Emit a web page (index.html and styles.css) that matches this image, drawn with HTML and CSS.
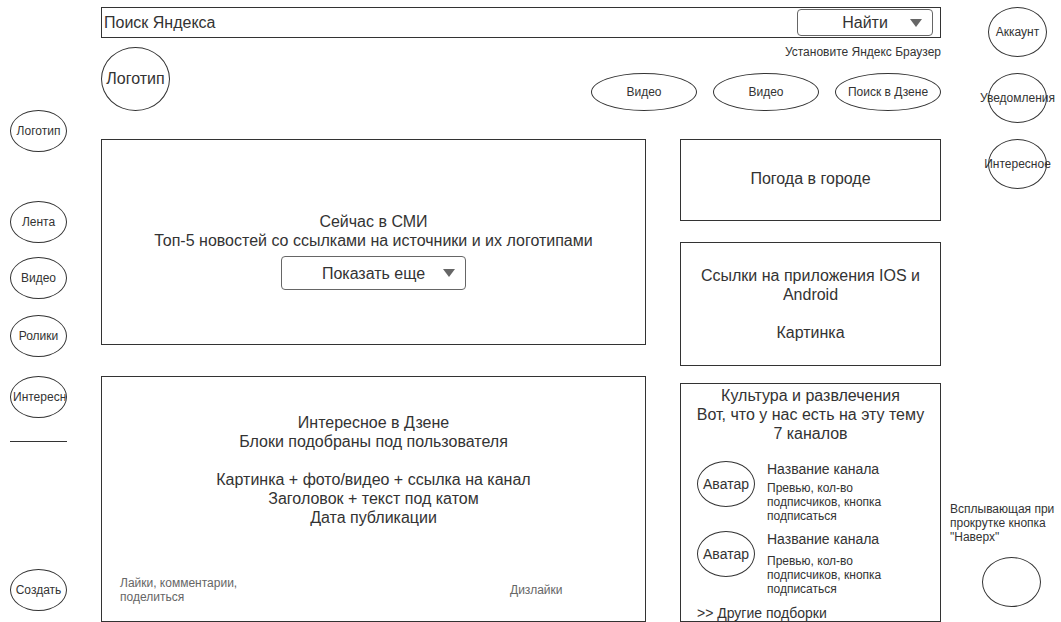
FILE: index.html
```html
<!DOCTYPE html>
<html lang="ru">

<head>
    <meta charset="utf-8">
    <title>Дзен — макет главной</title>
    <link rel="stylesheet" href="styles.css">
</head>

<body>
    <div class="page">
        <div class="left-nav">
            <div class="oval nav-oval nav-logo">Логотип</div>
            <div class="oval nav-oval nav-feed">Лента</div>
            <div class="oval nav-oval nav-video">Видео</div>
            <div class="oval nav-oval nav-clips">Ролики</div>
            <div class="oval nav-oval nav-interest clipped">Интересное</div>
            <div class="nav-line"></div>
            <div class="oval nav-oval nav-create">Создать</div>
        </div>

        <div class="center">
            <div class="search">
                <span class="search-text">Поиск Яндекса</span>
                <div class="dropdown find-btn">Найти</div>
            </div>

            <div class="header-row">
                <div class="oval logo">Логотип</div>
                <div class="header-right">
                    <div class="install">Установите Яндекс Браузер</div>
                    <div class="header-links">
                        <div class="oval link-oval">Видео</div>
                        <div class="oval link-oval">Видео</div>
                        <div class="oval link-oval">Поиск в Дзене</div>
                    </div>
                </div>
            </div>

            <div class="content">
                <div class="col-main">
                    <div class="box news">
                        <p>Сейчас в СМИ<br>Топ-5 новостей со ссылками на источники и их логотипами</p>
                        <div class="dropdown more-btn">Показать еще</div>
                    </div>
                    <div class="box feed">
                        <p>Интересное в Дзене<br>Блоки подобраны под пользователя<br><br>Картинка + фото/видео + ссылка на канал<br>Заголовок + текст под катом<br>Дата публикации</p>
                        <div class="feed-footer">
                            <span class="small likes">Лайки, комментарии, поделиться</span>
                            <span class="small">Дизлайки</span>
                        </div>
                    </div>
                </div>

                <div class="col-side">
                    <div class="box weather">Погода в городе</div>
                    <div class="box apps">Ссылки на приложения IOS и<br>Android<br><br>Картинка</div>
                    <div class="box culture">
                        <p>Культура и развлечения<br>Вот, что у нас есть на эту тему<br>7 каналов</p>
                        <div class="channel">
                            <div class="oval avatar">Аватар</div>
                            <div class="channel-info">
                                <div class="channel-name">Название канала</div>
                                <div class="channel-desc">Превью, кол-во подписчиков, кнопка подписаться</div>
                            </div>
                        </div>
                        <div class="channel">
                            <div class="oval avatar">Аватар</div>
                            <div class="channel-info">
                                <div class="channel-name">Название канала</div>
                                <div class="channel-desc second">Превью, кол-во подписчиков, кнопка подписаться</div>
                            </div>
                        </div>
                        <div class="more-link">&gt;&gt; Другие подборки</div>
                    </div>
                </div>
            </div>
        </div>

        <div class="right-nav">
            <div class="oval side-oval">Аккаунт</div>
            <div class="oval side-oval">Уведомления</div>
            <div class="oval side-oval">Интересное</div>
            <div class="up-note">Всплывающая при прокрутке кнопка "Наверх"</div>
            <div class="oval up-btn"></div>
        </div>
    </div>
</body>
</html>
```

FILE: styles.css
```css
* {
    box-sizing: border-box;
}

body {
    margin: 0;
    font-family: "Liberation Sans", Arial, sans-serif;
    color: #333;
    background-color: #fff;
    overflow: hidden;
}

p {
    margin: 0;
}

.page {
    display: flex;
    width: 1061px;
    height: 622px;
}

/* ovals */
.oval {
    display: flex;
    align-items: center;
    justify-content: center;
    border: 1px solid #333;
    border-radius: 50%;
    white-space: nowrap;
    text-align: center;
}

/* left column */
.left-nav {
    width: 101px;
    flex: none;
    padding-left: 10px;
    display: flex;
    flex-direction: column;
}

.nav-oval {
    width: 57px;
    height: 42px;
    font-size: 12px;
}

.nav-logo {
    margin-top: 110px;
}

.nav-feed {
    margin-top: 49px;
}

.nav-video {
    margin-top: 14px;
}

.nav-clips {
    margin-top: 16px;
}

.nav-interest {
    margin-top: 19px;
}

.clipped {
    overflow: hidden;
    justify-content: flex-start;
    padding-left: 2px;
}

.nav-line {
    width: 57px;
    margin-top: 23px;
    border-top: 1px solid #333;
}

.nav-create {
    margin-top: 127px;
}

/* center */
.center {
    width: 840px;
    flex: none;
}

.search {
    margin-top: 7px;
    height: 31px;
    border: 1px solid #333;
    display: flex;
    align-items: center;
    justify-content: space-between;
    padding: 0 7px 0 2px;
    font-size: 16px;
}

.dropdown {
    position: relative;
    display: flex;
    align-items: center;
    justify-content: center;
    border: 1px solid #666;
    border-radius: 4px;
    font-size: 16px;
}

.dropdown::after {
    content: "";
    position: absolute;
    right: 10px;
    top: 50%;
    margin-top: -4px;
    border-left: 6px solid transparent;
    border-right: 6px solid transparent;
    border-top: 8px solid #666;
}

.find-btn {
    width: 136px;
    height: 27px;
}

.header-row {
    height: 101px;
    display: flex;
    justify-content: space-between;
}

.logo {
    margin-top: 9px;
    width: 69px;
    height: 64px;
    font-size: 16px;
}

.header-right {
    display: flex;
    flex-direction: column;
    align-items: flex-end;
}

.install {
    margin-top: 7px;
    font-size: 12px;
    line-height: 14px;
}

.header-links {
    margin-top: 14px;
    display: flex;
    gap: 16px;
}

.link-oval {
    width: 106px;
    height: 38px;
    font-size: 12px;
}

/* content */
.content {
    display: grid;
    grid-template-columns: 545px 261px;
    column-gap: 34px;
}

.box {
    border: 1px solid #333;
    font-size: 16px;
    line-height: 19px;
    text-align: center;
}

.col-main,
.col-side {
    display: flex;
    flex-direction: column;
}

.news {
    height: 206px;
    padding-top: 72px;
    display: flex;
    flex-direction: column;
    align-items: center;
}

.more-btn {
    margin-top: 6px;
    width: 185px;
    height: 34px;
}

.feed {
    margin-top: 31px;
    height: 246px;
    padding-top: 36px;
}

.feed-footer {
    margin-top: 49px;
    padding-left: 18px;
    display: flex;
    align-items: center;
    text-align: left;
}

.small {
    font-size: 12px;
    line-height: 14px;
    color: #666;
}

.likes {
    width: 390px;
    padding-right: 260px;
}

.weather {
    height: 82px;
    padding-bottom: 3px;
    display: flex;
    align-items: center;
    justify-content: center;
}

.apps {
    margin-top: 21px;
    height: 124px;
    display: flex;
    align-items: center;
    justify-content: center;
}

.culture {
    margin-top: 17px;
    height: 239px;
    padding-top: 2px;
}

.culture p {
    white-space: nowrap;
}

.channel {
    margin-top: 18px;
    padding-left: 16px;
    display: flex;
    align-items: flex-start;
    gap: 12px;
    text-align: left;
}

.channel + .channel {
    margin-top: 8px;
}

.avatar {
    width: 58px;
    height: 46px;
    font-size: 14px;
}

.channel-name {
    font-size: 14px;
    line-height: 16px;
}

.channel-desc {
    margin-top: 4px;
    width: 130px;
    font-size: 12px;
    line-height: 14px;
}

.channel-desc.second {
    margin-top: 7px;
}

.more-link {
    margin-top: 9px;
    padding-left: 16px;
    font-size: 14px;
    line-height: 16px;
    text-align: left;
}

/* right column */
.right-nav {
    flex: 1;
    display: flex;
    flex-direction: column;
    padding-left: 9px;
}

.side-oval {
    margin-left: 38px;
    width: 59px;
    height: 50px;
    font-size: 12px;
    margin-top: 16px;
}

.side-oval:first-child {
    margin-top: 7px;
}

.up-note {
    margin-top: 313px;
    width: 112px;
    font-size: 12px;
    line-height: 14px;
}

.up-btn {
    margin-top: 13px;
    margin-left: 32px;
    width: 59px;
    height: 50px;
}
```
